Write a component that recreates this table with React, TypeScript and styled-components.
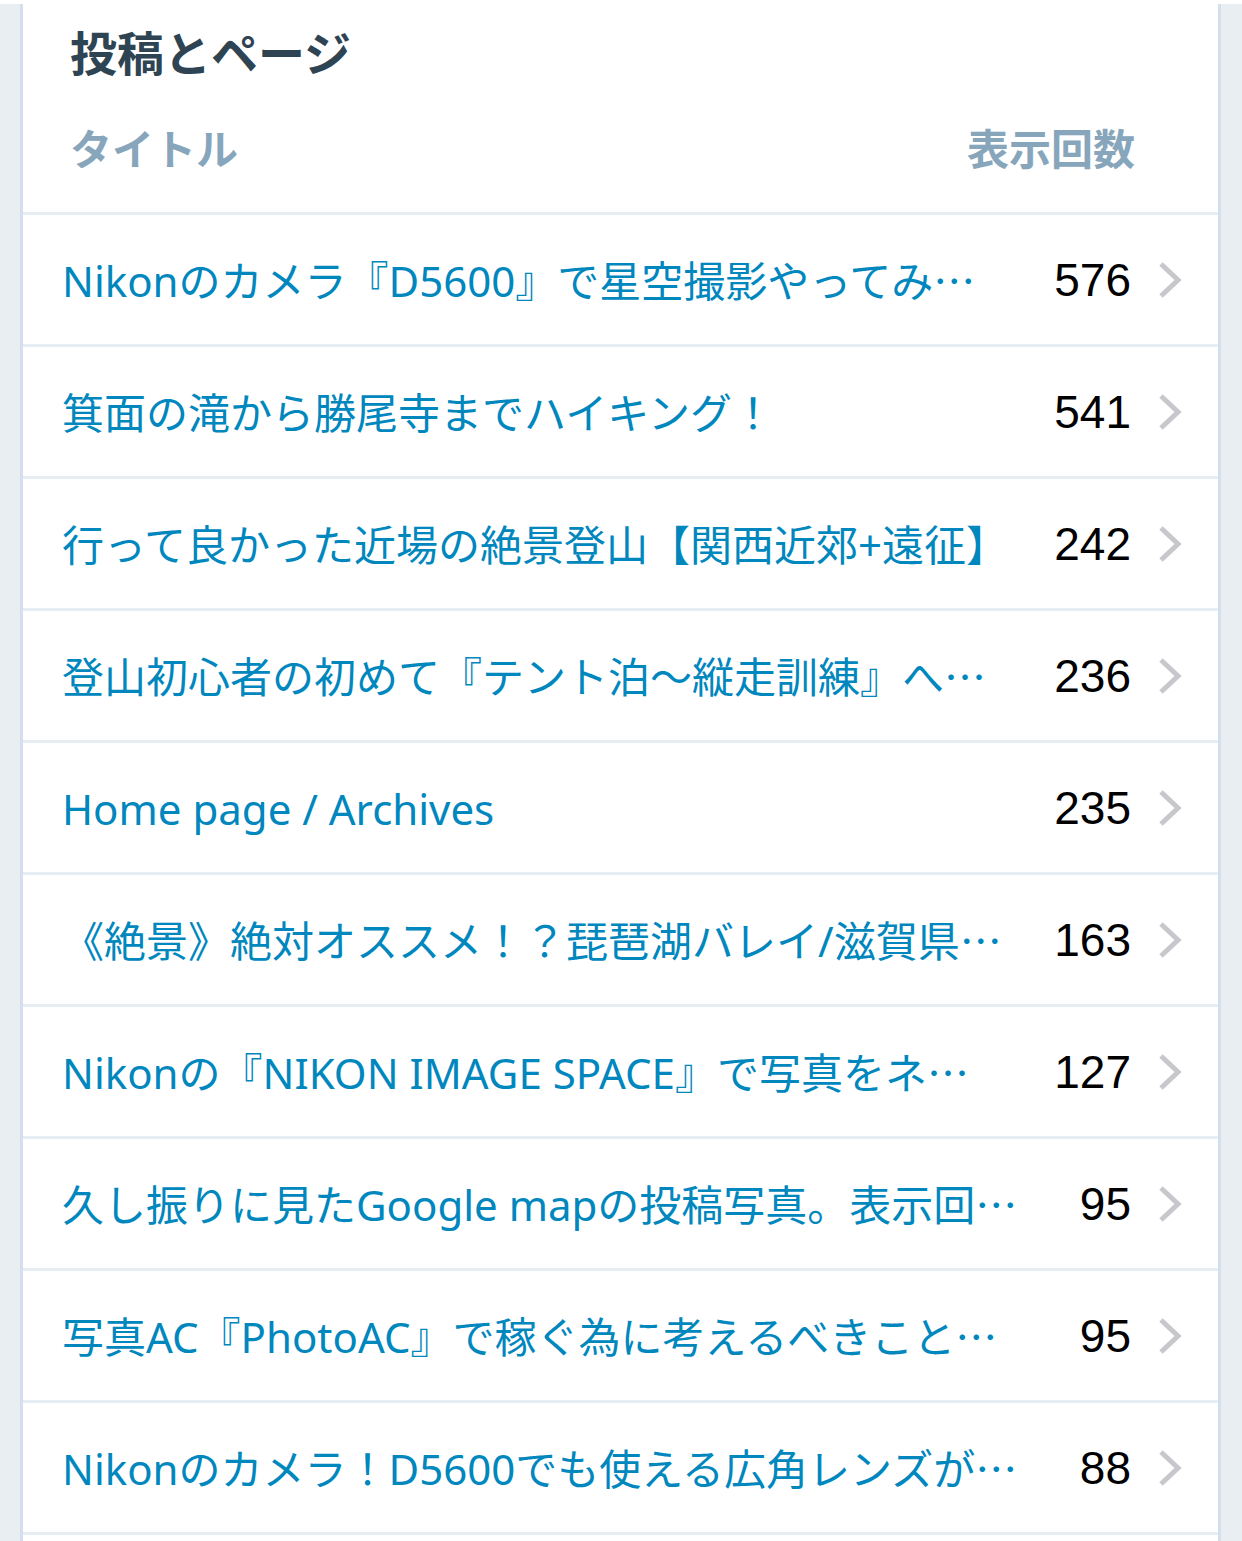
import styled, { createGlobalStyle } from 'styled-components'

const GlobalStyle = createGlobalStyle`
  html, body {
    margin: 0;
    padding: 0;
    background: #ffffff;
  }
  body {
    font-family: 'Noto Sans CJK JP', 'Noto Sans', sans-serif;
  }
`

type Post = {
  title: string
  views: number
}

const posts: Post[] = [
  { title: 'Nikonのカメラ『D5600』で星空撮影やってみた！初心者でも簡単', views: 576 },
  { title: '箕面の滝から勝尾寺までハイキング！', views: 541 },
  { title: '行って良かった近場の絶景登山【関西近郊+遠征】', views: 242 },
  { title: '登山初心者の初めて『テント泊〜縦走訓練』へ行ってきた', views: 236 },
  { title: 'Home page / Archives', views: 235 },
  { title: '《絶景》絶対オススメ！？琵琶湖バレイ/滋賀県の山', views: 163 },
  { title: 'Nikonの『NIKON IMAGE SPACE』で写真をネットにアップ', views: 127 },
  { title: '久し振りに見たGoogle mapの投稿写真。表示回数が凄い', views: 95 },
  { title: '写真AC『PhotoAC』で稼ぐ為に考えるべきこととは', views: 95 },
  { title: 'Nikonのカメラ！D5600でも使える広角レンズが欲しい', views: 88 },
]

const Chevron = () => (
  <ChevronSvg viewBox="0 0 24 38" aria-hidden="true">
    <path d="M3 3 L20 19 L3 35" fill="none" stroke="#c7c7cc" strokeWidth="5" />
  </ChevronSvg>
)

export default function App() {
  return (
    <>
      <GlobalStyle />
      <Page lang="ja">
        <Card>
          <Header>
            <Heading>投稿とページ</Heading>
            <Columns>
              <ColumnLabel>タイトル</ColumnLabel>
              <ColumnLabel>表示回数</ColumnLabel>
            </Columns>
          </Header>
          <List>
            {posts.map((post, i) => (
              <Row key={i}>
                <PostTitle>
                  <TitleText>{post.title}</TitleText>
                </PostTitle>
                <Views>{post.views}</Views>
                <Chevron />
              </Row>
            ))}
          </List>
        </Card>
      </Page>
    </>
  )
}

const Page = styled.div`
  margin-top: 4px;
  background: #e9eef3;
  padding: 0 21px 0 20px;
  min-height: 1537px;
`

const Card = styled.div`
  background: #ffffff;
  border-left: 3px solid #d3dfec;
  border-right: 3px solid #d3dfec;
  min-height: 1537px;
`

const Header = styled.div`
  height: 211px;
  box-sizing: border-box;
  padding: 18px 83px 0 47px;
  border-bottom: 3px solid #e6edf3;
`

const Heading = styled.h2`
  margin: 0;
  font-size: 47px;
  line-height: 58px;
  font-weight: 700;
  color: #2e4453;
`

const Columns = styled.div`
  display: flex;
  justify-content: space-between;
  align-items: center;
  margin-top: 42px;
`

const ColumnLabel = styled.span`
  font-size: 42px;
  line-height: 50px;
  font-weight: 700;
  color: #87a6bc;
`

const List = styled.div`
  display: flex;
  flex-direction: column;
`

const Row = styled.div`
  display: flex;
  align-items: center;
  height: 129px;
  padding: 0 36px 0 39px;
  border-bottom: 3px solid #e6edf3;
`

/* ellipsis is drawn with this block's font, so keep the CJK font here */
const PostTitle = styled.div`
  flex: 1;
  min-width: 0;
  white-space: nowrap;
  overflow: hidden;
  text-overflow: ellipsis;
  font-family: 'Noto Sans CJK JP', sans-serif;
  font-size: 42px;
  line-height: 56px;
  color: #0087be;
`

const TitleText = styled.span`
  font-family: 'Noto Sans', 'Noto Sans CJK JP', sans-serif;
`

const Views = styled.span`
  margin-left: 44px;
  font-family: 'Liberation Sans', Arial, sans-serif;
  font-size: 46px;
  line-height: 56px;
  color: #000000;
`

const ChevronSvg = styled.svg`
  width: 24px;
  height: 38px;
  margin-left: 27px;
  flex-shrink: 0;
`
